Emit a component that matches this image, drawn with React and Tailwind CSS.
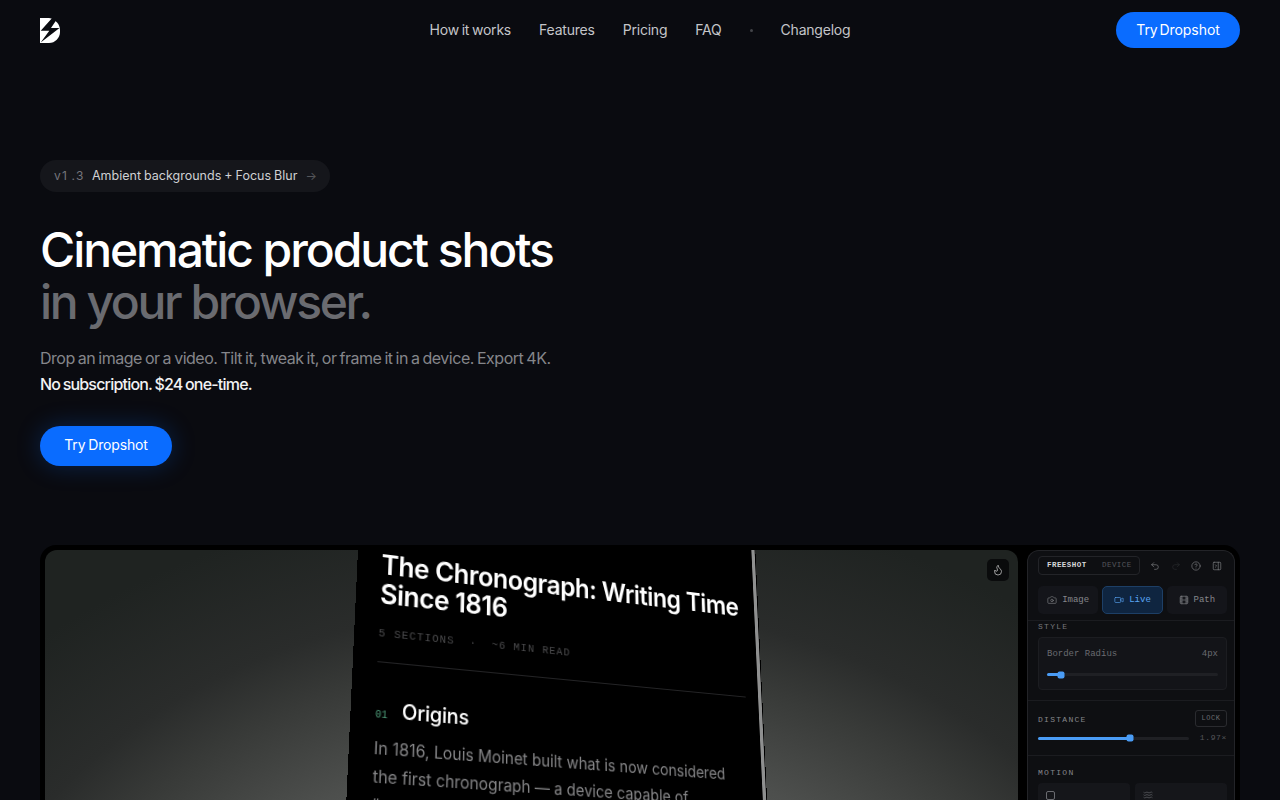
import React from "react";
import { Camera, Video, Film, Undo2, Redo2, CircleHelp, PanelRightClose, Flame, Waves } from "lucide-react";

const Logo = () => (
  <svg width="20" height="25" viewBox="0 0 20 25">
    <path d="M0 0H9C15 1 20 6 20 12V14C20 20 15 25 9 25H0Z" fill="#fff" />
    <path d="M11.7 0.5L0.7 12.7H9.3L0.7 24.6L19.5 10H11L16.7 1.5Z" fill="#0a0b10" />
  </svg>
);

const NavLink = ({ children }) => (
  <a className="text-[14px] leading-[18px] pb-px text-[#c4c5c9] tracking-[-0.015em] [word-spacing:-1px]">{children}</a>
);

const Header = () => (
  <header className="grid grid-cols-[1fr_auto_1fr] items-center h-[60px] px-10">
    <Logo />
    <nav className="flex items-center gap-7">
      <NavLink>How it works</NavLink>
      <NavLink>Features</NavLink>
      <NavLink>Pricing</NavLink>
      <NavLink>FAQ</NavLink>
      <span className="w-[3px] h-[3px] rounded-full bg-[#44454a]" />
      <NavLink>Changelog</NavLink>
    </nav>
    <div className="flex justify-end">
      <button className="h-9 w-[124px] pb-px rounded-full bg-[#0a6cff] text-[14px] text-white tracking-[-0.005em] [word-spacing:-2px]">
        Try Dropshot
      </button>
    </div>
  </header>
);

const Hero = () => (
  <section className="px-10 pt-[100px]">
    <div className="inline-flex items-center h-8 w-[290px] pl-[14px] rounded-full bg-[#15161b]">
      <span className="text-[12px] text-[#74757b] w-[38px] tracking-[0.1em] [word-spacing:-1px]">v1 .3</span>
      <span className="text-[12.5px] text-[#cfd0d3] [word-spacing:-0.5px]">Ambient backgrounds + Focus Blur</span>
      <span className="ml-2 text-[12px] text-[#55565b]">→</span>
    </div>
    <h1 className="mt-[32px] text-[48px] leading-[52px] font-medium tracking-[-0.043em] text-white">
      Cinematic product shots
      <span className="block text-[#6a6b70] tracking-[-0.05em]">in your browser.</span>
    </h1>
    <p className="mt-[17px] text-[16px] leading-[26px] text-[#85868b] tracking-[-0.03em] [word-spacing:-1px]">
      Drop an image or a video. Tilt it, tweak it, or frame it in a device. Export 4K.
      <span className="block font-medium text-[#f2f2f3] tracking-[-0.05em]">No subscription. $24 one-time.</span>
    </p>
    <button className="mt-[29px] h-10 w-[132px] pb-[3px] rounded-full bg-[#0a6cff] text-[14px] text-white tracking-[-0.01em] [word-spacing:-1px] shadow-[0_0_24px_rgba(10,108,255,0.25)]">
      Try Dropshot
    </button>
  </section>
);

const TiltedDoc = () => (
  <div className="absolute left-0 top-0 w-[444px] h-[400px] origin-top-left [transform:matrix3d(1.07819,0.12369,0,0.00024988,-0.12023,1,0,-0.00023529,0,0,1,0,313,0,0,1)]">
    <div className="absolute left-0 right-0 top-[-70px] h-[480px] bg-black pl-6 pr-4 pt-[67px]">
      <span className="absolute top-0 bottom-0 right-px w-1 bg-[#8f9090]" />
      <h2 className="text-[27px] leading-[29px] font-semibold tracking-[-0.02em] text-white">
        The Chronograph: Writing Time Since 1816
      </h2>
      <p className="mt-[17px] font-['Liberation_Mono',monospace] text-[11px] leading-[14px] tracking-[0.1em] text-[#4c4c4e]">
        5 SECTIONS &nbsp;·&nbsp; ~6 MIN READ
      </p>
      <div className="mt-[20px] mr-1 h-px bg-[#242426]" />
      <div className="mt-[32px] flex items-baseline gap-[14px]">
        <span className="font-['Liberation_Mono',monospace] text-[10px] text-[#4f9f7c]">01</span>
        <h3 className="text-[20px] font-medium leading-[26px] tracking-[-0.01em] text-white">Origins</h3>
      </div>
      <p className="mt-[10px] max-w-[375px] text-[15.8px] leading-[26px] text-[#858587]">
        In 1816, Louis Moinet built what is now considered the first chronograph — a device capable of “recording” elapsed time.
      </p>
    </div>
  </div>
);

const Preview = () => (
  <div className="relative flex-1 h-full overflow-hidden rounded-t-[12px] bg-[radial-gradient(ellipse_760px_560px_at_511px_500px,#7a7c7a_0%,#4d4f4d_54%,#383a38_70%,#2a2c2b_80%,#1f2321_100%)]">
    <TiltedDoc />
    <div className="absolute right-[9px] top-[9px] w-[22px] h-[22px] rounded-[5px] bg-[#0a0b0c] flex items-center justify-center">
      <Flame size={12} strokeWidth={1.5} className="text-[#c8c8c8]" />
    </div>
  </div>
);

const Slider = ({ className, pct }) => (
  <div className={`relative h-[3px] rounded-full bg-[#1f2024] ${className}`}>
    <div className="h-full rounded-full bg-[#4a9cf5]" style={{ width: `${pct}%` }} />
    <span className="absolute top-1/2 -translate-y-1/2 -translate-x-1/2 w-[7px] h-[7px] rounded-[2px] bg-[#4a9cf5]" style={{ left: `${pct}%` }} />
  </div>
);

const Tab = ({ icon: Icon, label, active }) => (
  <div
    className={`flex-1 h-7 rounded-[5px] flex items-center justify-center gap-[5px] text-[9px] border ${
      active ? "bg-[#0f2540] border-[#1d3f66] text-[#5aa5f5]" : "bg-[#14151a] border-transparent text-[#85868a]"
    }`}
  >
    <Icon size={10} strokeWidth={1.5} />
    <span className="pt-[2px]">{label}</span>
  </div>
);

const SidePanel = () => (
  <aside className="w-[208px] h-full rounded-t-[12px] border border-[#232428] border-b-0 bg-[#0e0f12] font-['Liberation_Mono',monospace] overflow-hidden">
    <div className="flex items-center pl-[10px] pr-[12px] pt-[5px]">
      <div className="flex items-center h-[19px] w-[102px] rounded-[4px] border border-[#232428] text-[7.5px] tracking-[0.06em]">
        <span className="w-[63px] pl-2 font-bold text-[#d8d8da]">FREESHOT</span>
        <span className="text-[#55565b]">DEVICE</span>
      </div>
      <div className="flex-1 flex items-center justify-between pl-[10px] text-[#85868a]">
        <Undo2 size={10} strokeWidth={1.5} />
        <Redo2 size={10} strokeWidth={1.5} className="text-[#2c2d30]" />
        <CircleHelp size={10} strokeWidth={1.5} />
        <PanelRightClose size={10} strokeWidth={1.5} />
      </div>
    </div>
    <div className="flex gap-1 pl-[10px] pr-[7px] mt-[11px]">
      <Tab icon={Camera} label="Image" />
      <Tab icon={Video} label="Live" active />
      <Tab icon={Film} label="Path" />
    </div>
    <div className="mt-[6px] border-t border-b border-[#1b1c20] pl-[10px] pr-[7px] pt-px pb-[10px]">
      <p className="text-[8px] leading-[10px] tracking-[0.16em] text-[#75767a]">STYLE</p>
      <div className="mt-[5px] h-[53px] rounded-[4px] border border-[#1c1d21] bg-[#131418] px-2 pt-[11px]">
        <div className="flex justify-between text-[9px] leading-[10px] text-[#6a6b70]">
          <span>Border Radius</span>
          <span>4px</span>
        </div>
        <Slider className="mt-[14px]" pct={8} />
      </div>
    </div>
    <div className="pl-[10px] pr-[7px] pt-[9px] pb-[11px] border-b border-[#1b1c20]">
      <div className="flex items-center justify-between">
        <span className="pt-[2px] text-[8px] tracking-[0.16em] text-[#85868a]">DISTANCE</span>
        <span className="h-[17px] w-8 rounded-[3px] border border-[#2a2b2f] flex items-center justify-center text-[7px] tracking-[0.08em] text-[#6a6b70]">LOCK</span>
      </div>
      <div className="flex items-center gap-[11px] mt-[5px]">
        <Slider className="flex-1" pct={61} />
        <span className="text-[8px] tracking-[0.08em] text-[#55565b]">1.97×</span>
      </div>
    </div>
    <div className="pl-[10px] pr-[7px] pt-[12px]">
      <p className="text-[8px] leading-[10px] tracking-[0.16em] text-[#85868a]">MOTION</p>
      <div className="flex gap-[5px] mt-[5px]">
        <div className="flex-1 h-10 rounded-[4px] bg-[#15161a] pl-2 pt-2 text-[#6a6b70]">
          <span className="block w-[9px] h-[9px] rounded-[2px] border border-[#6a6b70]" />
        </div>
        <div className="flex-1 h-10 rounded-[4px] bg-[#15161a] pl-2 pt-[7px] text-[#6a6b70]">
          <Waves size={10} strokeWidth={1.5} />
        </div>
      </div>
    </div>
  </aside>
);

export default function App() {
  return (
    <div className="h-screen overflow-hidden bg-[#0a0b10] font-['Inter',sans-serif]">
      <Header />
      <Hero />
      <div className="mx-10 mt-[79px] h-[260px] rounded-t-[16px] bg-black pl-[5px] pr-[5px] pt-[5px] flex gap-[9px]">
        <Preview />
        <SidePanel />
      </div>
    </div>
  );
}
